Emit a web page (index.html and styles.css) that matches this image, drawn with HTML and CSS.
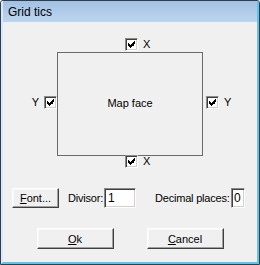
FILE: index.html
```html
<!DOCTYPE html>
<html>
<head>
<meta charset="utf-8">
<link rel="stylesheet" href="styles.css">
</head>
<body>
<div class="window">
  <div class="titlebar">Grid tics</div>
  <div class="body">
    <div class="mapgrid">
      <div class="cell"></div>
      <div class="cell topcheck">
        <span class="check"><svg width="7" height="7" viewBox="0 0 7 7" shape-rendering="crispEdges"><path d="M6 0h1v3h-1zM5 1h1v4h-1zM4 2h1v3h-1zM3 3h1v3h-1zM2 4h1v3h-1zM1 3h1v3h-1zM0 2h1v3h-1z" fill="#000"/></svg></span>
        <span class="clabel">X</span>
      </div>
      <div class="cell"></div>
      <div class="cell leftcell">
        <span class="clabel-l">Y</span>
        <span class="check"><svg width="7" height="7" viewBox="0 0 7 7" shape-rendering="crispEdges"><path d="M6 0h1v3h-1zM5 1h1v4h-1zM4 2h1v3h-1zM3 3h1v3h-1zM2 4h1v3h-1zM1 3h1v3h-1zM0 2h1v3h-1z" fill="#000"/></svg></span>
      </div>
      <div class="cell mapface">Map face</div>
      <div class="cell rightcell">
        <span class="check"><svg width="7" height="7" viewBox="0 0 7 7" shape-rendering="crispEdges"><path d="M6 0h1v3h-1zM5 1h1v4h-1zM4 2h1v3h-1zM3 3h1v3h-1zM2 4h1v3h-1zM1 3h1v3h-1zM0 2h1v3h-1z" fill="#000"/></svg></span>
        <span class="clabel">Y</span>
      </div>
      <div class="cell"></div>
      <div class="cell bottomcheck">
        <span class="check"><svg width="7" height="7" viewBox="0 0 7 7" shape-rendering="crispEdges"><path d="M6 0h1v3h-1zM5 1h1v4h-1zM4 2h1v3h-1zM3 3h1v3h-1zM2 4h1v3h-1zM1 3h1v3h-1zM0 2h1v3h-1z" fill="#000"/></svg></span>
        <span class="clabel">X</span>
      </div>
      <div class="cell"></div>
    </div>
    <div class="controls">
      <div class="btn btn-font"><span class="u">F</span>ont...</div>
      <span class="lbl lbl-div">Divisor:</span>
      <div class="field field-div">1</div>
      <span class="lbl lbl-dec">Decimal places:</span>
      <div class="field field-dec">0</div>
    </div>
    <div class="actions">
      <div class="btn btn-act"><span class="u">O</span>k</div>
      <div class="btn btn-act"><span class="u">C</span>ancel</div>
    </div>
  </div>
</div>
</body>
</html>
```
FILE: styles.css
```css
html, body {
  margin: 0;
  padding: 0;
  background: #f0f0f0;
}
.window {
  width: 260px;
  height: 265px;
  box-sizing: border-box;
  border: 1px solid #2f3f50;
  border-radius: 3px 3px 0 0;
  display: flex;
  flex-direction: column;
  font-family: "Liberation Sans", Arial, sans-serif;
  font-size: 11px;
  color: #000;
  overflow: hidden;
}
.titlebar {
  height: 21px;
  flex: none;
  background: linear-gradient(#a3c1e4, #bdd5ee);
  border-left: 2px solid #dbe8f5;
  border-right: 2px solid #58c6ee;
  font-size: 12px;
  line-height: 23px;
  padding-left: 5px;
  box-sizing: border-box;
}
.body {
  flex: 1;
  background: #f0f0f0;
  border-left: 2px solid #dbe8f5;
  border-right: 2px solid #58c6ee;
  border-bottom: 2px solid #58c6ee;
  display: flex;
  flex-direction: column;
}
.mapgrid {
  display: grid;
  grid-template-columns: 54px 146px 1fr;
  grid-template-rows: 13px 104px 13px;
  row-gap: 0;
  margin-top: 15px;
}
.cell {
  display: flex;
  align-items: center;
}
.topcheck {
  padding-left: 68px;
  margin-bottom: -2px;
}
.bottomcheck {
  padding-left: 68px;
  margin-top: 2px;
}
.mapface {
  margin-top: 2px;
  height: 104px;
  box-sizing: border-box;
  border: 1px solid #6a6a6a;
  justify-content: center;
  padding-bottom: 2px;
}
.leftcell {
  justify-content: flex-end;
  margin-top: 2px;
  padding-bottom: 2px;
}
.rightcell {
  padding-left: 3px;
  margin-top: 2px;
  padding-bottom: 2px;
}
.check {
  width: 13px;
  height: 13px;
  box-sizing: border-box;
  background: #fff;
  border: 1px solid;
  border-color: #8a8a8a #fff #fff #8a8a8a;
  box-shadow: inset 1px 1px #404040, inset -1px -1px #d4d0c8;
  display: flex;
  align-items: center;
  justify-content: center;
  flex: none;
}
.check svg {
  display: block;
}
.clabel {
  margin-left: 5px;
  line-height: 13px;
}
.clabel-l {
  margin-right: 5px;
  line-height: 13px;
}
.controls {
  display: flex;
  align-items: center;
  margin-top: 21px;
  height: 20px;
}
.btn {
  box-sizing: border-box;
  background: #f0f0f0;
  border: 1px solid;
  border-color: #fff #404040 #404040 #fff;
  box-shadow: inset -1px -1px #a0a0a0, inset 1px 1px #f8f8f8;
  display: flex;
  align-items: center;
  justify-content: center;
  flex: none;
}
.u {
  text-decoration: underline;
}
.btn-font {
  width: 47px;
  height: 20px;
  margin-left: 9px;
}
.lbl {
  white-space: nowrap;
  flex: none;
}
.lbl-div {
  width: 34px;
  margin-left: 9px;
  letter-spacing: -0.2px;
}
.lbl-dec {
  width: 74px;
  margin-left: 19px;
  letter-spacing: -0.2px;
}
.field {
  box-sizing: border-box;
  height: 20px;
  background: #fff;
  border: 1px solid;
  border-color: #8a8a8a #fff #fff #8a8a8a;
  box-shadow: inset 1px 1px #404040, inset -1px -1px #d4d0c8;
  font-size: 12px;
  line-height: 18px;
  padding-left: 3px;
  flex: none;
}
.field-div {
  width: 32px;
  margin-left: 2px;
}
.field-dec {
  width: 14px;
  margin-left: 2px;
  padding-left: 2px;
}
.actions {
  display: flex;
  justify-content: center;
  gap: 33px;
  margin-top: 20px;
}
.btn-act {
  width: 77px;
  height: 21px;
}
```
